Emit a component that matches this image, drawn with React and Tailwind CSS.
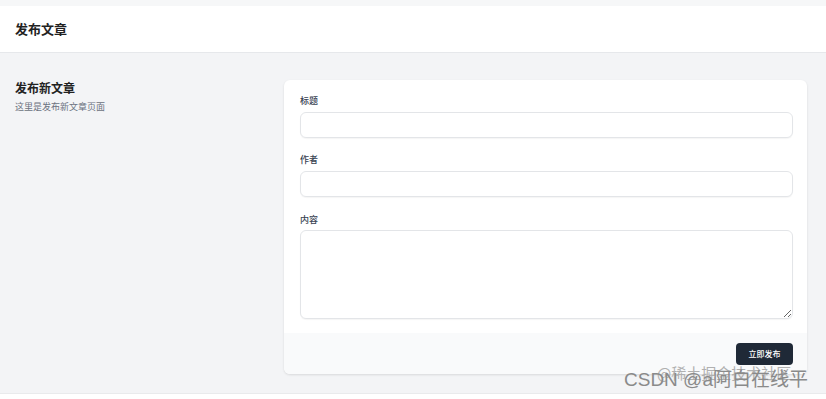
export default function App() {
  const font = { fontFamily: '"Noto Sans CJK SC", "Noto Sans", sans-serif' };
  return (
    <div className="relative w-[826px] h-[399px] overflow-hidden bg-white" style={font}>
      <div className="h-[6px] bg-[#f6f7f8]" />
      <header className="h-[47px] bg-white border-b border-[#e6e8eb] shadow-[0_1px_2px_rgba(0,0,0,0.04)] flex items-center pl-[15px]">
        <h1 className="text-[13px] leading-[16px] font-semibold text-[#222]">发布文章</h1>
      </header>
      <main className="h-[341px] bg-[#f3f4f6] border-b border-[#e9eaec] flex pt-[27px]">
        <div className="w-[284px] shrink-0 pl-[15px]">
          <h2 className="text-[12px] leading-[16px] font-semibold text-[#222]">发布新文章</h2>
          <p className="mt-[5px] text-[9px] leading-[12px] text-[#6b7280]">这里是发布新文章页面</p>
        </div>
        <div className="flex-1 mr-[19px] h-[294px] bg-white rounded-md shadow-[0_1px_3px_rgba(0,0,0,0.08),0_1px_2px_rgba(0,0,0,0.04)] overflow-hidden flex flex-col">
          <div className="pl-[16px] pr-[14px] pt-[15px] pb-[14px] flex flex-col">
            <label className="text-[9px] leading-[12px] text-[#374151] font-medium">标题</label>
            <input className="mt-[5px] h-[26px] w-full rounded-md border border-[#e3e5e8] shadow-[0_1px_1px_rgba(0,0,0,0.04)] bg-white outline-none" />
            <label className="mt-[16px] text-[9px] leading-[12px] text-[#374151] font-medium">作者</label>
            <input className="mt-[5px] h-[26px] w-full rounded-md border border-[#e3e5e8] shadow-[0_1px_1px_rgba(0,0,0,0.04)] bg-white outline-none" />
            <label className="mt-[17px] text-[9px] leading-[12px] text-[#374151] font-medium">内容</label>
            <textarea className="mt-[4px] h-[89px] w-full rounded-md border border-[#e3e5e8] shadow-[0_1px_1px_rgba(0,0,0,0.04)] bg-white outline-none resize-y" />
          </div>
          <div className="flex-1 bg-[#f9fafb] flex items-start justify-end pt-[10px] pr-[14px]">
            <button className="h-[22px] w-[57px] rounded-[4px] bg-[#1f2937] text-white text-[8px] leading-[10px] font-medium">立即发布</button>
          </div>
        </div>
      </main>
      <div className="absolute left-[657px] top-[364px] text-[15px] leading-[18px] text-[#b0b0b0] whitespace-nowrap" style={{ fontFamily: '"Noto Sans CJK SC", sans-serif' }}>@稀土掘金技术社区</div>
      <div className="absolute left-[624px] top-[369px] text-[19px] leading-[22px] text-[#8a8a8a] whitespace-nowrap" style={{ fontFamily: '"Liberation Sans", "Noto Sans CJK SC", sans-serif' }}>CSDN @a阿白在线平</div>
    </div>
  );
}
